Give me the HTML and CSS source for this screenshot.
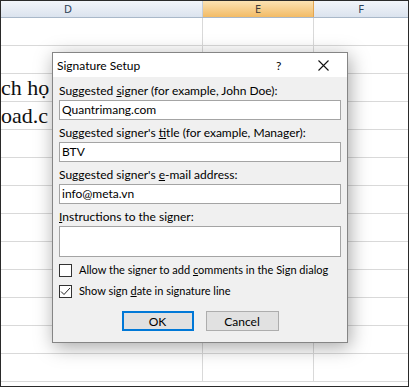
FILE: index.html
```html
<!DOCTYPE html>
<html lang="vi">
<head>
    <meta charset="utf-8">
    <title>Signature Setup</title>
    <link rel="stylesheet" href="styles.css">
</head>
<body>
    <div class="sheet">
        <div class="col-heads">
            <div class="col-head col-d">D</div>
            <div class="col-head col-e">E</div>
            <div class="col-head col-f">F</div>
        </div>
        <div class="row"><div class="cell cell-d"></div><div class="cell cell-e"></div><div class="cell cell-f"></div></div>
        <div class="row"><div class="cell cell-d"></div><div class="cell cell-e"></div><div class="cell cell-f"></div></div>
        <div class="row"><div class="cell cell-d"><span class="big-text">ch họ</span></div><div class="cell cell-e"></div><div class="cell cell-f"></div></div>
        <div class="row"><div class="cell cell-d"><span class="big-text">oad.c</span></div><div class="cell cell-e"></div><div class="cell cell-f"></div></div>
        <div class="row"><div class="cell cell-d"></div><div class="cell cell-e"></div><div class="cell cell-f"></div></div>
        <div class="row"><div class="cell cell-d"></div><div class="cell cell-e"></div><div class="cell cell-f"></div></div>
        <div class="row"><div class="cell cell-d"></div><div class="cell cell-e"></div><div class="cell cell-f"></div></div>
        <div class="row"><div class="cell cell-d"></div><div class="cell cell-e"></div><div class="cell cell-f"></div></div>
        <div class="row"><div class="cell cell-d"></div><div class="cell cell-e"></div><div class="cell cell-f"></div></div>
        <div class="row"><div class="cell cell-d"></div><div class="cell cell-e"></div><div class="cell cell-f"></div></div>
        <div class="row"><div class="cell cell-d"></div><div class="cell cell-e"></div><div class="cell cell-f"></div></div>
        <div class="row"><div class="cell cell-d"></div><div class="cell cell-e"></div><div class="cell cell-f"></div></div>
        <div class="row"><div class="cell cell-d"></div><div class="cell cell-e"></div><div class="cell cell-f"></div></div>

        <!-- dialog floats over the worksheet -->
        <div class="dialog">
            <div class="title-bar">
                <span class="title">Signature Setup</span>
                <span class="help">?</span>
                <svg class="close" width="11" height="11" viewBox="0 0 11 11">
                    <path d="M0.5 0.5 L10.5 10.5 M10.5 0.5 L0.5 10.5" stroke="#111" stroke-width="1.1" fill="none"/>
                </svg>
            </div>
            <div class="dialog-body">
                <div class="field">
                    <label>Suggested <u>s</u>igner (for example, John Doe):</label>
                    <div class="text-box">Quantrimang.com</div>
                </div>
                <div class="field">
                    <label>Suggested signer's <u>t</u>itle (for example, Manager):</label>
                    <div class="text-box">BTV</div>
                </div>
                <div class="field">
                    <label>Suggested signer's <u>e</u>-mail address:</label>
                    <div class="text-box">info@meta.vn</div>
                </div>
                <div class="field">
                    <label><u>I</u>nstructions to the signer:</label>
                    <div class="text-box text-area"></div>
                </div>
                <div class="check-row first">
                    <span class="check-box"></span>
                    <span>Allow the signer to add <u>c</u>omments in the Sign dialog</span>
                </div>
                <div class="check-row">
                    <span class="check-box">
                        <svg width="11" height="11" viewBox="0 0 11 11">
                            <path d="M1 5.5 L4 8.5 L10 2" stroke="#222" stroke-width="1" fill="none"/>
                        </svg>
                    </span>
                    <span>Show sign <u>d</u>ate in signature line</span>
                </div>
                <div class="buttons">
                    <button class="btn btn-default">OK</button>
                    <button class="btn">Cancel</button>
                </div>
            </div>
        </div>
    </div>
</body>
</html>
```
FILE: styles.css
```css
/* --- worksheet --- */
body {
    margin: 0;
    background: #ffffff;
}

.sheet {
    position: relative;
    width: 409px;
    height: 387px;
    box-sizing: border-box;
    border: 1px solid #2a2a2a;
    overflow: hidden;
    background: #ffffff;
}

.col-heads { display: flex; height: 17px; box-sizing: border-box; border-bottom: 1px solid #a9b8c9; }
.col-head {
    font-family: "Noto Sans", sans-serif;
    font-size: 11px;
    line-height: 16px;
    color: #2b3f58;
    background: linear-gradient(#f2f5fa, #dbe3ee);
    border-right: 1px solid #c4cfdc;
    box-sizing: border-box;
}
.col-d { width: 202px; padding-left: 63px; }
.col-e { width: 111px; text-align: center; background: linear-gradient(#fbe2b3, #f2bb66); border-right-color: #e3a550; color: #3b3b3b; }
.col-f { flex: 1; text-align: center; border-right: none; }

.row { display: flex; height: 28px; box-sizing: border-box; border-bottom: 1px solid #d9d9d9; }
.cell { box-sizing: border-box; border-right: 1px solid #d9d9d9; }
.cell-d { width: 202px; }
.cell-e { width: 111px; }
.cell-f { flex: 1; border-right: none; }

.big-text {
    display: block;
    font-family: "Liberation Serif", serif;
    font-size: 22px;
    line-height: 27px;
    white-space: nowrap;
    color: #111;
}

/* --- dialog --- */
.dialog {
    position: absolute;
    left: 51px;
    top: 51px;
    width: 296px;
    height: 291px;
    box-sizing: border-box;
    border: 1px solid #858585;
    background: #f0f0f0;
    box-shadow: 2px 4px 18px rgba(0, 0, 0, 0.35);
    font-family: Lato, sans-serif;
    font-size: 12px;
    color: #000;
}

.title-bar { display: flex; align-items: center; height: 24px; background: #ffffff; padding-left: 4px; }
.title { flex: 1; font-size: 12px; }
.help { width: 12px; margin-right: 30px; font-size: 12px; }
.close { margin-right: 18px; }

.dialog-body { padding: 6px 6px 0 6px; }
.field { margin-bottom: 5px; }
.field label { display: block; line-height: 16px; margin-bottom: 1px; white-space: nowrap; }
.text-box {
    height: 20px;
    box-sizing: border-box;
    border: 1px solid #a4a4a4;
    background: #ffffff;
    padding-left: 2px;
    line-height: 18px;
}
.text-area { height: 31px; }

.check-row { display: flex; align-items: center; gap: 7px; line-height: 16px; margin-top: 5px; white-space: nowrap; font-size: 11px; }
.check-row.first { margin-top: 3px; }
.check-box {
    flex-shrink: 0;
    width: 13px;
    height: 13px;
    box-sizing: border-box;
    border: 1px solid #333;
    background: #ffffff;
    display: flex;
    align-items: center;
    justify-content: center;
}

.buttons { display: flex; justify-content: center; gap: 12px; margin-top: 12px; }
.btn {
    width: 73px;
    height: 20px;
    box-sizing: border-box;
    border: 1px solid #adadad;
    background: #e1e1e1;
    font-family: Lato, sans-serif;
    font-size: 12px;
    color: #000;
    padding: 0;
}
.btn-default { width: 72px; border: 2px solid #0078d7; }
```
